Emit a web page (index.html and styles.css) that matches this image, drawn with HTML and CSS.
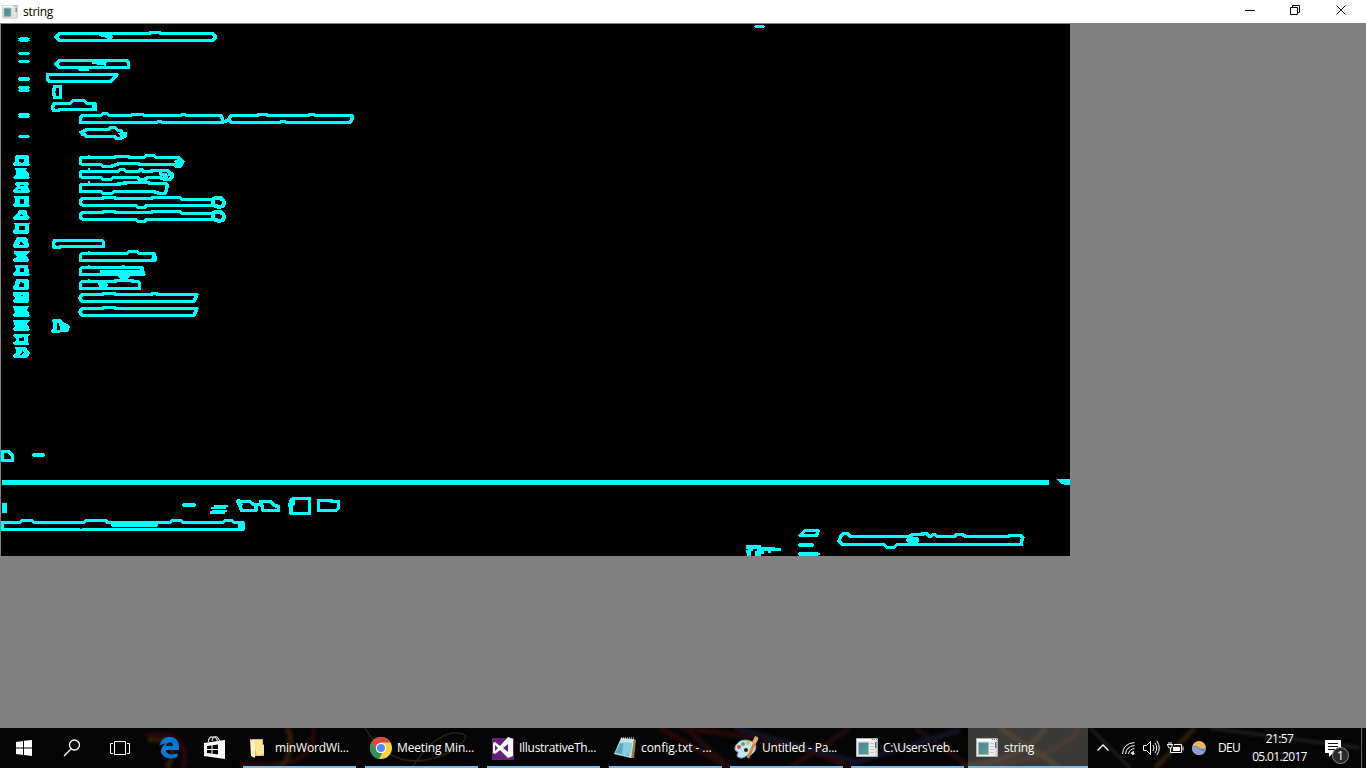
FILE: index.html
```html
<!DOCTYPE html>
<html lang="de">
<head>
<meta charset="utf-8">
<title>string</title>
<link rel="stylesheet" href="styles.css">
</head>
<body>
<svg class="defs" width="0" height="0"><defs>
  <linearGradient id="pane" x2="1" y2="1"><stop offset="0" stop-color="#4d7dae"/><stop offset="1" stop-color="#58a77c"/></linearGradient>
  <symbol id="app" viewBox="0 0 22 20">
    <path fill="#ececec" stroke="#b0b0b0" d="M.5 .5H21.500V18.500H.5Z"/><path fill="#fff" d="M1 1H15V3H1Z"/>
    <path fill="#888" d="M16 1h1v1h-1zM18 1h1v1h-1zM20 1h1v1h-1z"/>
    <path fill="url(#pane)" stroke="#a5b6bf" d="M2.500 4.500H12.500V16.500H2.500Z"/>
    <path stroke="#c6c6c6" d="M14 5.500h4M14 8.500h4M14 11.500h4M14 14.500h4"/><path fill="#d8d8d8" d="M19 3h2v15h-2z"/><path fill="#397c91" d="M19 4h1.500v6H19z"/>
  </symbol>
  <symbol id="code-row" viewBox="0 0 150 16" overflow="visible">
    <path class="line" d="M2 6L4 2.500H24L26 1.500H36L38 2.500H73L75 1.500H102L104 3.500H133M4 9.500H58L60 11.500H66L69 9.500H133M4 9.500L2 6"/>
    <path class="loop" d="M135 3L137 2H142.500L145 4L146.500 7L145 10L141 11L138 10L135 9Z"/>
  </symbol>
</defs></svg>
<div class="desktop">
  <header class="titlebar">
    <svg class="title-icon" width="16" height="14"><use href="#app" width="16" height="14"/></svg>
    <h1 class="title">string</h1>
    <svg class="controls" width="138" height="23" viewBox="1228 0 138 23" fill="none" stroke="#000">
      <path d="M1245 10.500H1255M1290.500 7.500H1297.500V14.500H1290.500ZM1292.500 7.500V5.500H1299.500V12.500H1297.500"/>
      <path d="M1336.500 5.500L1345.500 14.500M1345.500 5.500L1336.500 14.500"/>
    </svg>
  </header>
  <main class="client">
    <svg class="canvas" width="1069" height="532" viewBox="1 24 1069 532" shape-rendering="crispEdges">
      <!-- line number marks -->
      <path class="blob" d="M19 38H29V41H19ZM20 37H28V42H20ZM18 38H30V39H18ZM18 40H30V41H18ZM19 52H29V55H19ZM18 53H30V54H18ZM19 60H29V63H19ZM18 61H30V62H18ZM19 77H29V81H19ZM18 78H30V80H18ZM19 86H29V92H19ZM18 87H30V88H18ZM18 90H30V91H18ZM19 113H29V118H19ZM18 114H30V115H18ZM18 116H30V117H18ZM19 135H29V138H19ZM18 136H30V137H18Z"/>
      <g class="blob" fill-rule="evenodd">
        <path d="M16 155H27L29 157V162L30 165L28 166H14L13 164L15 161V157ZM19 159V162L22 163L24 162V159Z"/>
        <path d="M15 168H27L26 171L29 174V176L30 178L28 179H14L13 177L16 174V171Z"/>
        <path d="M16 182H27L29 184L28 187L30 191L28 193H14L13 190L17 187L15 184ZM20 185V186H24V185ZM18 189H21V190H18Z"/>
        <path d="M14 196H29V204L30 206L28 207H14L13 205L15 202V199ZM20 199V204H24V199Z"/>
        <path d="M19 210H25L27 212V215L30 217L28 220H14L13 217L17 214ZM21 214L20 216H24Z"/>
        <path d="M14 223H30L29 225V232L28 234H14L13 231L15 228V225ZM19 226V230H25V226Z"/>
        <path d="M17 237H26L28 240L29 246L28 248H14L13 245L15 241ZM21 241L19 245H24Z"/>
        <path d="M14 251H30L28 254L25 255L28 257L29 260L28 262H14L13 259L17 257L14 254Z"/>
        <path d="M15 265H28L29 272L30 275L28 276H14L13 273L16 271ZM20 268V272H24V268Z"/>
        <path d="M16 279H27L29 281V288L28 290H14L13 287L15 284ZM20 282L19 287H24V283Z"/>
        <path d="M13 292H29V301L28 303H14L12 301L16 298L13 296ZM20 295L22 296L24 295Z"/>
        <path d="M13 306H29L27 310L29 313L30 316L28 317H14L12 315L15 312Z"/>
        <path d="M13 320H30L27 324L29 327L30 330L28 331H14L12 329L15 326Z"/>
        <path d="M14 334H30L28 336V341L29 344L28 345H14L12 343L16 341V338L13 336ZM19 338V341H24V337Z"/>
        <path d="M15 347H26L28 351L30 353L29 355L26 358H14L12 356L16 353V350ZM20 350L22 352L20 355H22L24 352Z"/>
      </g>
      <!-- text block contours -->
      <g class="line">
        <path d="M56 37L59.500 33.500H149L151 32.500H159L161 33.500H213L215.500 37L213 40.500H60Z"/>
        <path d="M56 64L60 60.500H127L128.500 63V67.500H60ZM79 68.500L81 69.500H87L89 68.500"/>
        <path d="M47.500 74.500H117L114 78L111 81.500H49L47.500 79Z"/>
        <path d="M54.500 86.500H60.500V97.500H54.500L53.500 92Z"/>
        <path d="M54 103.500H70L73 100.500H84L87 103.500H95V109.500H60L58 110.500H53.500L52.500 107Z"/>
        <path d="M80.500 122.500V118L82 115.500H101L103 113.500H107L109 115.500H131L132 114.500H143L144 115.500H181L182 114.500H185L186 115.500H221L222.500 119L223 122.500H162L161 121.500H158L157 122.500ZM225 122L229 119L231 115.500H257L259 114.500H266L268 115.500H308L310 114.500H314L315 115.500H352V119L350 122.500H286L285 121.500H281L280 122.500H232L229 120"/>
        <path d="M80 133L87 129.500H108L111 127.500H115L118 130.500H121L122 134M81 134L84 134L87 136.500H114L117 138.500H121L125 135"/>
        <path d="M80.500 164.500V158.500L82 157.500H114L116 156.500H128L130 157.500H144L146 155.500H154L156 157.500H179L181 160M80.500 164.500H101L103 166.500H111L113 165.500L118 164L120 163.500H138L140 164.500H174L177 166.500H181"/>
        <path d="M80.500 177.500V172.500L82 171.500H118L120 169.500H124L126 171.500H138L141 169.500L144 171.500H150L153 170.500H167L170 173M80.500 177.500H101L103 179.500H111L113 177.500H137L140 179.500H144L148 177.500H160L165 179.500H170L172 177V174L168 174.500M160 171L161 174.500H167M163 176.500H168"/>
        <path d="M80.500 191.500V185.500L82 184.500H116L128 182.500H148L150 183.500H165L167.500 185.500L166 191L165 193.500H159L154 191.500H114L112 193.500H103L101 191.500Z"/>
        <path d="M54.500 240.500H102L103.500 242V246.500H61L59 247.500H54L53.500 243Z"/>
        <path d="M80.500 260.500V255L82 253.500H127L129 251.500H137L139 253.500H154L155 257V260.500Z"/>
        <path d="M80.500 274.500V269L82 267.500H142V270L144 274.500Z"/>
        <path d="M80.500 288.500V283L82 281.500H114L117 280.500H131L134 281.500H138L139.500 283V288.500Z"/>
        <path d="M80 298L82 294.500H102L104 293.500H114L116 294.500H151L153 293.500H156L158 294.500H197L194 301.500H82Z"/>
        <path d="M80 312L82 308.500H102L104 307.500H114L116 308.500H197L194 315.500H82Z"/>
      </g>
      <use href="#code-row" x="78" y="196" width="150" height="16"/>
      <use href="#code-row" x="78" y="210" width="150" height="16"/>
      <path class="blob" fill-rule="evenodd" d="M98 33H111L113 37L110 41H104L107 38L99 36ZM92 61H107L106 66L102 65L92 64ZM91 103H97V111H93ZM78 132L82 130L86 134L82 136ZM118 133L127 132V137L122 139ZM174 161L181 158L185 161L182 167L177 167ZM137 180H147L144 183H140ZM88 155H90V157H88ZM88 168H90V171H88ZM88 181H90V184H88ZM88 251H90V253H88ZM88 265H90V267H88ZM88 279H90V281H88ZM122 265H125V268H122ZM100 270H142V275H100ZM117 275H131L127 280H121ZM98 282H107L108 285L107 288H99ZM152 255H155L157 261H151ZM53 319H61L63 322L67 324L70 327L68 332L52 333L51 330L53 328V323L51 321ZM57 323V330H60V326H59V323Z"/>
      <!-- output area contours -->
      <g class="line">
        <path d="M2.500 451.500H9L12.500 455.500V460.500H2.500Z"/>
        <path d="M238 501.500H250L252 503.500L256 505.500V510.500H241.500L240 506Z"/>
        <path d="M261 501.500H271L274 505.500L278.500 506.500V510.500H263L262 506ZM254 504.500H263"/>
        <path d="M293 498.500H309.500V513.500H291V508L290 506L293 503Z"/>
        <path d="M318.500 500.500H330L333 501.500H338.500V508L336 510.500H318.500Z"/>
        <path d="M2.500 522.500H20L22 520.500H32L34 522.500H84L86 520.500H105L108 522.500H170L172 520.500H181L183 522.500H223L225 520.500H232L234 522.500H243V529.500H2.500Z"/>
        <path d="M800 535.500L805 530.500H818L816.500 535.500Z"/>
        <path d="M839 541L841 536L844 533.500H848L850 536.500H909L913 534.500H921L924 533.500H927L929 536.500H931L933 534.500H935L937 536.500H954L957 534.500H962L966 536.500H1008L1010 535.500H1020L1023 537.500L1021.500 541V544.500H897L894 547.500H887L884 544.500H843Z"/>
      </g>
      <path class="blob" d="M755 25H764V28H755ZM754 26H765V27H754ZM33 453H44V457H33ZM32 454H45V456H32ZM2 480H1049V485H2ZM1057 479H1070V485H1065L1060 483ZM2 503H7V513H2ZM183 503H195V507H183ZM182 504H196V506H182ZM214 505H228V507H226V509H211V507H214ZM212 510H227V512H225V514H210V511H212ZM110 522H159L157 527H112ZM238 523H244V530H238ZM244 523H245V525H244ZM244 527H245V529H244ZM237 499H240L243 505L239 506L236 502ZM290 498H295V505L291 508L288 505ZM799 543H813V547H799ZM798 544H814V546H798ZM799 552H818V556H799ZM798 553H820V555H798ZM908 537H917L919 539V541L917 543H908L906 541V539Z"/>
      <path class="blob" d="M746 545H761V547H775V548H781V551H771V553H768V551H764V554H761V556H755V551H757V549H753V551H751V556H747V553H746V550H748V549H746Z"/>
      <path d="M80 528H82" stroke="#000" stroke-width="1"/>
    </svg>
  </main>
  <footer class="taskbar">
    <svg class="wallpaper" width="1366" height="40" fill="none">
      <g class="streaks" opacity=".26" stroke-width="5"><path stroke="#8b170e" d="M146 8Q190 0 184 40M240 36Q318 44 313 0M680 0Q800 12 850 40M660 0L730 40M980 40Q1060 30 1080 0"/><path stroke="#a26b18" d="M148 12Q184 9 167 40M287 0Q297 18 281 40M960 38Q1020 35 1046 0M1000 0L1060 40M1155 40L1195 0"/><path stroke="#782028" d="M680 -5L730 40M790 40L850 0M915 0L965 35"/><path stroke="#38408a" d="M735 0L860 35M850 36L960 2"/></g>
      <path stroke="#59421c" stroke-width="1.500" opacity=".45" d="M365 0Q395 50 450 24Q480 4 452 5Q430 10 412 40"/>
      <path class="streaks" stroke="#423d39" stroke-width="3" opacity=".5" d="M1090 0L1130 40M1210 0L1360 20"/>
    </svg>
    <div class="launchers">
      <svg class="launch" viewBox="0 0 48 40"><path fill="#fff" d="M16 14L23 13V19.500H16ZM24 12.800L32 12V19.500H24ZM16 20.500H23V27L16 26ZM24 20.500H32V28L24 27Z"/></svg>
      <svg class="launch" viewBox="48 0 48 40" fill="none" stroke="#fff" stroke-width="1.300"><circle cx="74.500" cy="17" r="5"/><path d="M71 21L64 28"/></svg>
      <svg class="launch" viewBox="96 0 48 40" fill="none" stroke="#fff"><path d="M114.500 13.500H125.500V26.500H114.500ZM113 15.500H110.500V25.500H113M127 15.500H129.500V25.500H127"/></svg>
      <svg class="launch" viewBox="144 0 48 40"><path fill="#0078d7" d="M159.500 18C161 6 178 5.500 179 17.500V22H166C166 27 173 27.500 177.500 25V29C169 32.500 161 29 161 23C161 19 164 17 166 15.500C163 15.500 161 16.500 159.500 18ZM166 18H173C173 13 167 13 166 18Z" fill-rule="evenodd"/></svg>
      <svg class="launch" viewBox="192 0 48 40"><path fill="#fff" d="M204 15L225 12V31L204 28Z"/><path d="M208.500 14V12Q210 8 213 9Q217 9 217.500 14M212 13Q213 7 217 9L220 13" fill="none" stroke="#ddd" stroke-width="1.200"/><path fill="#080707" d="M207 18L211.500 17.500V21H207ZM212.500 17.300L218 16.500V21H212.500ZM207 22H211.500V25.500L207 25ZM212.500 22H218V26.500L212.500 25.700Z"/></svg>
    </div>
    <nav class="tasks">
      <div class="task"><svg class="icon" viewBox="0 0 24 24"><path fill="#e8bd58" d="M5 3H16V8L17 9V20H9L5 21Z"/><path fill="#ffe49a" d="M6 4H15V9H17V18L10 20Z"/><path fill="#fff0bc" d="M3 3L8 5V22L4 20Z"/></svg><span class="label folder">minWordWi...</span></div>
      <div class="task"><svg class="icon" viewBox="0 0 24 24"><circle cx="12" cy="12" r="11" fill="#f9cf3e"/><path fill="#dc493c" d="M2.500 6.500A11 11 0 0 1 21.500 6.500H12L7 14Z"/><path fill="#25935b" d="M2.500 6.500L8 15L14 16L10 23A11 11 0 0 1 2.500 6.500Z"/><circle cx="12" cy="12" r="5.200" fill="#fff"/><circle cx="12" cy="12" r="4" fill="#4d8df3"/></svg><span class="label chrome">Meeting Min...</span></div>
      <div class="task"><svg class="icon" viewBox="0 0 24 24"><path fill="#68217a" d="M1 2H23V24H1Z"/><path fill="#fff" fill-rule="evenodd" d="M17 1L22 3V20L17 22L9 14L4 18L2 17V7L4 6L9 10ZM17 8L12 12L17 16ZM4 9V15L7 12Z"/></svg><span class="label studio">IllustrativeTh...</span></div>
      <div class="task"><svg class="icon" viewBox="0 0 24 24"><path fill="#9b783e" d="M20 3L23 4L21 22L17 22Z"/><path fill="#c2e4ec" d="M8 2L21 3L18 22L1 18Z"/><path fill="#5ca9bc" d="M7 7L18 8L16 20L2 17Z"/><path fill="#85cbd9" d="M10 6L19 7L18 17L9 20Z"/><path stroke="#fff" stroke-dasharray="1 1" d="M8 2H21"/></svg><span class="label config">config.txt - ...</span></div>
      <div class="task"><svg class="icon" viewBox="0 0 24 24"><path fill="#c5e5ee" stroke="#6ba8c6" d="M3 8C7 2 16 4 20 7C25 11 19 20 14 19C9 22 8 23 4 21C1 19 7 16 2 15C0 13 1 10 3 8Z"/><circle cx="5" cy="11" r="2" fill="#d84e42"/><circle cx="9" cy="8" r="2" fill="#62ac41"/><circle cx="14" cy="7" r="2" fill="#f1b733"/><circle cx="12" cy="14" r="2" fill="#172330"/><path stroke="#dd843b" stroke-width="3" d="M21 6L14 22"/><path stroke="#dfad73" stroke-width="4" d="M23 1L20 7"/></svg><span class="label paint">Untitled - Pa...</span></div>
      <div class="task"><svg class="icon" viewBox="0 0 24 24"><use href="#app" x="1" y="2" width="22" height="20"/></svg><span class="label users">C:\Users\reb...</span></div>
      <div class="task active"><svg class="icon" viewBox="0 0 24 24"><use href="#app" x="1" y="2" width="22" height="20"/></svg><span class="label current">string</span></div>
    </nav>
    <div class="tray">
      <svg class="status" width="128" height="40" viewBox="1088 0 128 40" fill="none" stroke="#fff">
        <path stroke-width="1.400" d="M1097.500 22.500L1103 17L1108.500 22.500"/>
        <path d="M1122.500 26Q1123 15.500 1134.500 14.500M1125.500 26Q1126 18.500 1134.500 17.500M1128.500 26Q1129 21.500 1134.500 20.500M1131 26Q1131 24 1134 23.500"/><circle cx="1133" cy="25.500" r="1" fill="#fff"/>
        <path d="M1143.500 17.500H1146.500L1150.500 13.500V26.500L1146.500 22.500H1143.500ZM1153 17Q1155 20 1153 23M1155 15Q1158.500 20 1155 25M1157 13Q1161.500 20 1157 27"/>
        <path d="M1174 16.500H1181.500V24.500H1170.500V20M1183 18.500V22.500M1168 16V18Q1168 20 1170 20T1172 18V16M1169 16V14M1171 16V14M1167 16.500H1173"/><path fill="#fff" stroke="none" d="M1173 19H1180V23H1173Z"/>
        <circle cx="1199" cy="20" r="7" fill="#efb75d" stroke="none"/><path fill="#6487bd" stroke="none" d="M1192 20Q1195 16 1198 19Q1201 22 1206 20A7 7 0 0 1 1192 20Z"/><path fill="#a8bfe0" stroke="none" d="M1192 20Q1196 17 1199 21Q1202 24 1205 23Q1204 27 1199 27A7 7 0 0 1 1192 20Z" opacity=".5"/>
      </svg>
      <span class="language">DEU</span>
      <div class="clock"><span class="time">21:57</span><span class="date">05.01.2017</span></div>
      <svg class="notice" width="44" height="40" viewBox="1317 0 44 40"><path fill="#fff" d="M1325 12H1341V25H1333L1329 29V25H1325Z"/><path stroke="#111" d="M1328 15.500H1338M1328 18.500H1338M1328 21.500H1335"/><circle cx="1340.500" cy="27.500" r="8" fill="#292929" stroke="#8c8c8c"/><text class="badge" x="1340.500" y="32" text-anchor="middle">1</text></svg>
    </div>
  </footer>
</div>
</body>
</html>
```

FILE: styles.css
```css
* { box-sizing: border-box; }
body { margin: 0; overflow: hidden; font: 12px "Open Sans", "Noto Sans", sans-serif; }
svg { display: block; flex: none; }
.defs { position: absolute; }
.desktop { width: 1366px; height: 768px; display: flex; flex-direction: column; background: #808080; }
.titlebar { height: 23px; background: #fff; display: flex; align-items: center; padding-left: 2px; }
.title-icon { margin-right: 5px; }
.title { margin: 0; font-size: 12px; font-weight: 400; line-height: 22px; padding-top: 1px; letter-spacing: -.3px; }
.controls { margin-left: auto; }
.client { flex: 1; padding: 1px 0 0 1px; }
.canvas { background: #000; overflow: hidden; }
.line { fill: none; stroke: #0ff; stroke-width: 3.5; stroke-linejoin: round; }
.loop { fill: none; stroke: #0ff; stroke-width: 4; }
.blob { fill: #0ff; }
.taskbar { height: 40px; background: #050404; display: flex; position: relative; color: #fff; }
.wallpaper { position: absolute; inset: 0; }
.streaks { filter: blur(1.5px); }
.launchers, .tasks, .tray { position: relative; display: flex; height: 40px; }
.launchers { width: 243px; }
.launch { width: 48px; height: 40px; }
.tasks { width: 845px; display: grid; grid-template-columns: 122px 122px 122px 121px 121px 117px 120px; }
.task { width: 113px; height: 40px; display: flex; align-items: center; padding-left: 4px; border-bottom: 2px solid #76b9ed; }
.task.active { width: 120px; padding-left: 7px; background: rgba(113, 110, 103, .5); }
.icon { width: 24px; height: 24px; margin-right: 4px; margin-top: 2px; }
.active .icon { margin-right: 5px; }
.label { white-space: nowrap; line-height: 20px; padding-top: 1px; }
.folder { letter-spacing: -.15px; }
.chrome { letter-spacing: -.15px; }
.studio { letter-spacing: -.28px; }
.config { letter-spacing: -.05px; }
.paint { letter-spacing: -.2px; }
.users { letter-spacing: -.3px; }
.current { letter-spacing: -.3px; }
.tray { width: 274px; border-right: 1px solid #666; }
.language { width: 26px; padding-left: 2px; line-height: 40px; letter-spacing: -.7px; }
.clock { width: 75px; display: flex; flex-direction: column; align-items: center; padding-top: 2px; }
.time, .date { line-height: 18px; letter-spacing: -.65px; }
.badge { fill: #fff; font: 13px "Open Sans", sans-serif; }
```
